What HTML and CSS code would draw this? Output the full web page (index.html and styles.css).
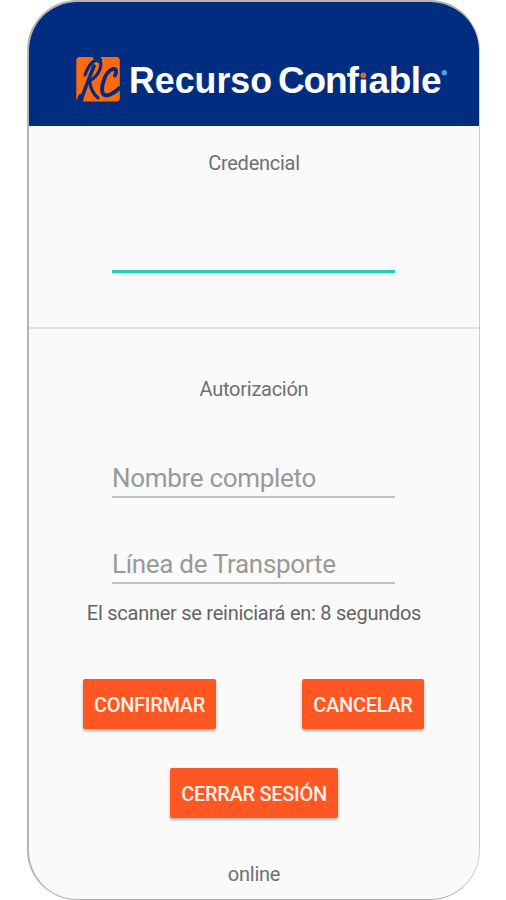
FILE: index.html
```html
<!DOCTYPE html>
<html lang="es">
<head>
<meta charset="utf-8">
<title>Recurso Confiable</title>
<link rel="stylesheet" href="styles.css">
</head>
<body>
<main class="phone">
  <header class="header">
    <svg class="logo" width="380" height="60" viewBox="70 50 380 60" role="img" aria-label="Recurso Confiable">
      <rect x="76.300" y="57" width="43.500" height="44.500" rx="3.500" fill="#ff6a10"/>
      <g fill="none" stroke="#002d80" stroke-linecap="round" stroke-linejoin="round">
        <path d="M94 66Q90 76 82 97" stroke-width="3.600"/>
        <path d="M81 97L79.500 103" stroke-width="6"/>
        <path d="M85 75Q89 63 96 60Q103 60 100 69Q97 77 89.500 81Q91 92 98 98" stroke-width="3.200"/>
        <path d="M96 57L99 60" stroke-width="6"/>
        <path d="M115 75.500Q118 68.500 113 69Q106 71 103 83Q100 95 106.500 95.500Q112 95 119.500 88" stroke-width="3.900"/>
      </g>
      <g class="logo-text">
        <text x="129" y="93.300" textLength="143" lengthAdjust="spacingAndGlyphs">Recurso</text>
        <text x="278 303.500 325 346.500 358.300 368.600 388.800 410.800 421" y="93.300">Confiable</text>
      </g>
      <rect x="360" y="64" width="7.500" height="15.500" fill="#002d80"/>
      <circle cx="363.400" cy="75.400" r="2.800" fill="#e8662c"/>
      <circle cx="444.300" cy="72.800" r="2.700" fill="#48a5d8"/>
    </svg>
  </header>
  <section class="credential">
    <h1 class="label">Credencial</h1>
    <div class="scan-line"></div>
  </section>
  <section class="authorization">
    <h2 class="label">Autorización</h2>
    <div class="field field-name"><span>Nombre completo</span></div>
    <div class="field field-line"><span>Línea de Transporte</span></div>
    <p class="label timer">El scanner se reiniciará en: 8 segundos</p>
    <div class="actions">
      <button class="button confirm">CONFIRMAR</button>
      <button class="button cancel">CANCELAR</button>
    </div>
    <button class="button logout">CERRAR SESIÓN</button>
    <p class="label status">online</p>
  </section>
</main>
</body>
</html>
```

FILE: styles.css
```css
* { box-sizing: border-box; }
body {
  margin: 0;
  height: 900px;
  overflow: hidden;
  background: #fff;
  font-family: Roboto, "Liberation Sans", sans-serif;
}
.phone {
  width: 453px;
  height: 900px;
  margin-left: 27px;
  display: flex;
  flex-direction: column;
  overflow: hidden;
  background: #fafafa;
  border: 2px solid #b4b4b4;
  border-right: 1px solid #d0d0d0;
  border-bottom-width: 1px;
  border-radius: 50px;
}
.header {
  height: 124px;
  flex: none;
  padding: 48px 0 0 41px;
  background: #002d80;
}
.logo { display: block; }
.logo-text {
  font: bold 37px "Liberation Sans", Arial, sans-serif;
  fill: #fff;
}
.label {
  margin: 0;
  font-size: 20px;
  font-weight: 400;
  line-height: 24px;
  letter-spacing: -.26px;
  color: #707070;
  text-align: center;
  white-space: nowrap;
}
.credential {
  height: 203px;
  flex: none;
  padding-top: 25px;
  border-bottom: 2px solid #e2e2e2;
}
.scan-line {
  width: 283px;
  height: 3px;
  margin: 95px 0 0 83px;
  background: #1dcfba;
}
.authorization {
  display: flex;
  flex-direction: column;
  padding-top: 48px;
}
.field {
  width: 283px;
  margin-left: 83px;
  border-bottom: 2px solid #c1c1c1;
  color: #999;
  font-size: 26px;
  line-height: 32px;
  letter-spacing: -.31px;
  white-space: nowrap;
}
.field-name { height: 41px; margin-top: 56px; padding-top: 5px; }
.field-line { height: 42px; margin-top: 44px; padding-top: 6px; }
.timer { margin-top: 17px; color: #646464; }
.actions {
  display: flex;
  justify-content: space-between;
  margin: 54px 55px 0 54px;
}
.button {
  height: 50px;
  padding: 2px 0 0;
  border: 0;
  border-radius: 2px;
  background: #ff5722;
  box-shadow: 0 2px 3px rgba(0, 0, 0, .3);
  color: #fff0e8;
  font: 500 20px Roboto, "Liberation Sans", sans-serif;
  letter-spacing: -.3px;
  white-space: nowrap;
}
.confirm { width: 133px; }
.cancel { width: 122px; }
.logout { width: 168px; margin: 39px 0 0 141px; }
.status { margin-top: 44px; }
```
